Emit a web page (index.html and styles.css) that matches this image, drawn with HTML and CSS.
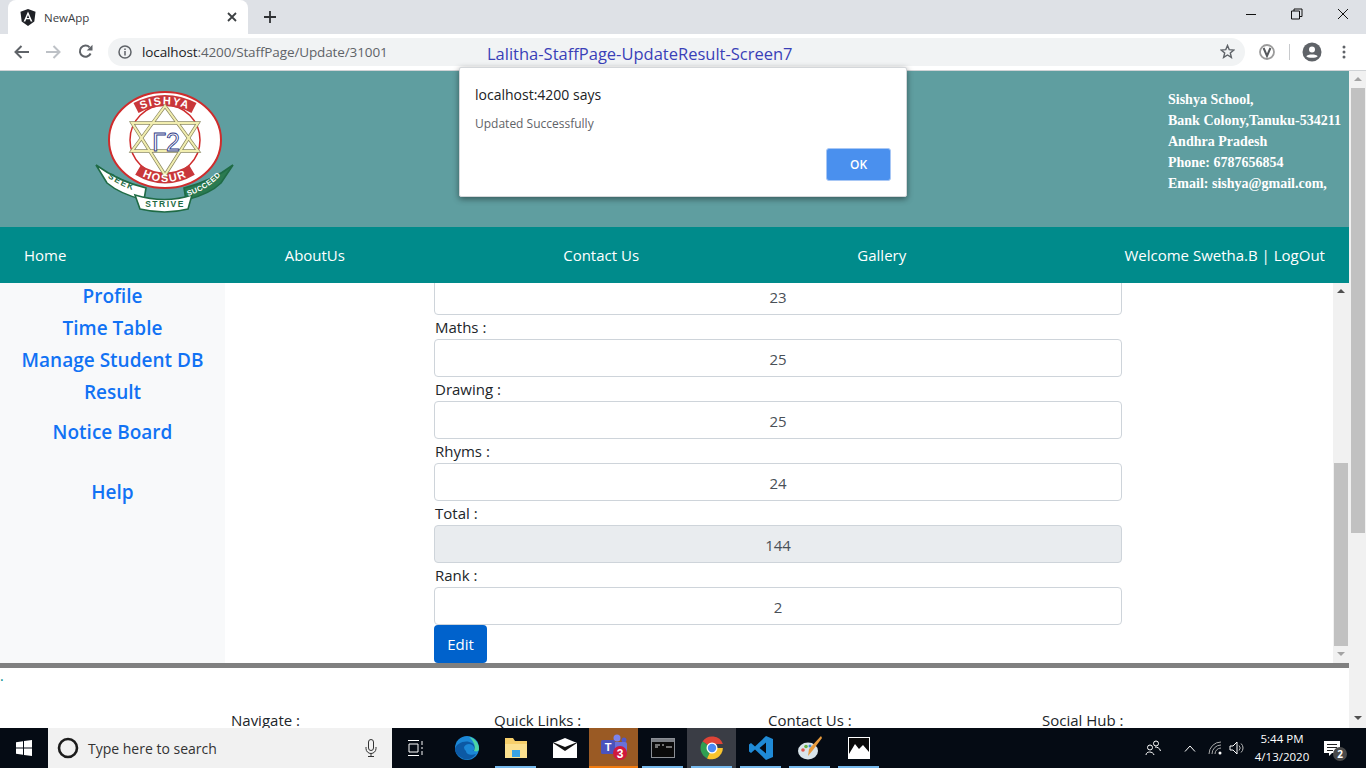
FILE: index.html
```html
<!DOCTYPE html>
<html lang="en">

<head>
    <meta charset="UTF-8">
    <title>NewApp</title>
    <link rel="stylesheet" href="styles.css">
</head>

<body>
    <div class="screen">
        <!-- browser chrome -->
        <div class="tabstrip">
            <div class="tab">
                <svg class="favicon" width="16" height="17" viewBox="0 0 16 17">
                    <path d="M8 0 L15.5 2.7 L14.3 12.6 L8 17 L1.7 12.6 L.5 2.7Z" fill="#1f2126" />
                    <path d="M8 2.6 L3.6 12.6 H5.3 L6.2 10.3 H9.8 L10.7 12.6 H12.4Z M8 6 L9.2 8.9 H6.8Z" fill="#fff" fill-rule="evenodd" />
                </svg>
                <span class="tab-title">NewApp</span>
                <svg class="tab-close" width="10" height="10" viewBox="0 0 10 10">
                    <path d="M1 1 L9 9 M9 1 L1 9" stroke="#3c4043" stroke-width="1.8" />
                </svg>
            </div>
            <svg class="new-tab" width="14" height="14" viewBox="0 0 14 14">
                <path d="M7 1 V13 M1 7 H13" stroke="#2f3134" stroke-width="1.8" />
            </svg>
            <div class="win-controls">
                <svg width="12" height="12" viewBox="0 0 12 12"><path d="M1 6.5 H11" stroke="#111" /></svg>
                <svg width="12" height="12" viewBox="0 0 12 12"><path d="M.5 3 H8.5 V11 H.5Z M3 3 V1 H11 V8.5 H8.5" fill="none" stroke="#111" /></svg>
                <svg width="12" height="12" viewBox="0 0 12 12"><path d="M1 1 L11 11 M11 1 L1 11" stroke="#111" /></svg>
            </div>
        </div>
        <div class="toolbar">
            <svg class="nav-back" width="16" height="14" viewBox="0 0 16 14">
                <path d="M15 7 H2 M7.5 1 L1.5 7 L7.5 13" fill="none" stroke="#5f6368" stroke-width="2" />
            </svg>
            <svg class="nav-forward" width="16" height="14" viewBox="0 0 16 14">
                <path d="M1 7 H14 M8.5 1 L14.5 7 L8.5 13" fill="none" stroke="#bdc1c6" stroke-width="2" />
            </svg>
            <svg class="nav-reload" width="15" height="15" viewBox="0 0 15 15">
                <path d="M12.6 9.5 A5.6 5.6 0 1 1 11.6 3.4" fill="none" stroke="#5f6368" stroke-width="2" />
                <path d="M14.5 .8 V6.6 H8.7Z" fill="#5f6368" />
            </svg>
            <div class="omnibox">
                <svg class="info-icon" width="14" height="14" viewBox="0 0 14 14">
                    <circle cx="7" cy="7" r="6" fill="none" stroke="#5f6368" stroke-width="1.5" />
                    <path d="M7 6 V10.5 M7 3.4 V5" stroke="#5f6368" stroke-width="1.5" />
                </svg>
                <span class="url"><b>localhost</b>:4200/StaffPage/Update/31001</span>
                <span class="screen-note">Lalitha-StaffPage-UpdateResult-Screen7</span>
                <svg class="star" width="15" height="15" viewBox="0 0 15 15">
                    <path d="M7.5 1.5 L9.2 5.6 L13.8 6 L10.3 8.9 L11.4 13.4 L7.5 11 L3.6 13.4 L4.7 8.9 L1.2 6 L5.8 5.6Z" fill="none" stroke="#5f6368" stroke-width="1.4" />
                </svg>
            </div>
            <svg class="ext-icon" width="16" height="16" viewBox="0 0 16 16">
                <circle cx="8" cy="8" r="7" fill="none" stroke="#9b9b9b" stroke-width="1.8" />
                <path d="M4.6 4 L8 12 L11.4 4" fill="none" stroke="#55585c" stroke-width="2" />
            </svg>
            <span class="toolbar-sep"></span>
            <svg class="profile-icon" width="20" height="20" viewBox="0 0 20 20">
                <circle cx="10" cy="10" r="9.5" fill="#5f6368" />
                <circle cx="10" cy="7.4" r="3" fill="#fff" />
                <path d="M4.3 14.2 C5.5 11.8 14.5 11.8 15.7 14.2 C14 16.4 6 16.4 4.3 14.2Z" fill="#fff" />
            </svg>
            <svg class="menu-dots" width="4" height="14" viewBox="0 0 4 14">
                <circle cx="2" cy="2" r="1.5" fill="#5f6368" />
                <circle cx="2" cy="7" r="1.5" fill="#5f6368" />
                <circle cx="2" cy="12" r="1.5" fill="#5f6368" />
            </svg>
        </div>

        <!-- the page -->
        <div class="viewport">
            <div class="page">
                <header class="site-head">
                    <svg class="logo" width="170" height="140" viewBox="0 0 170 140">
                        <defs>
                            <path id="arcTop" d="M56 32 Q85 17 114 32" />
                            <path id="arcBottom" d="M58 94 Q85 110 112 94" />
                            <path id="ribbonLeft" d="M27 97 Q42 107 60 113" />
                            <path id="ribbonRight" d="M108 116 Q128 110 145 91" />
                        </defs>
                        <!-- ribbon ends -->
                        <path d="M16 85 Q38 101 66 108 L64 120 Q40 114 27 103Z" fill="#fff" stroke="#1f6b45" stroke-width="1.6" />
                        <path d="M153 85 Q132 101 104 108 L106 120 Q130 114 141 103Z" fill="#2a7a50" stroke="#1f6b45" stroke-width="1.6" />
                        <ellipse cx="85" cy="60" rx="56" ry="48" fill="#fff" stroke="#cf2c2c" stroke-width="2" />
                        <ellipse cx="85" cy="60" rx="35" ry="35" fill="none" stroke="#cf2c2c" stroke-width="1.5" />
                        <path d="M56 28 Q85 13 114 28" fill="none" stroke="#c9373a" stroke-width="11" />
                        <path d="M58 90 Q85 106 112 90" fill="none" stroke="#c9373a" stroke-width="11" />
                        <path d="M85 26 L118 71 H52Z M85 95 L52 43 H118Z" fill="none" stroke="#8d8a63" stroke-width="3.4" />
                        <path d="M85 26 L118 71 H52Z M85 95 L52 43 H118Z" fill="none" stroke="#f2eeb0" stroke-width="2" />
                        <text class="logo-mark" x="86" y="71" text-anchor="middle">Γ2</text>
                        <text class="logo-band"><textPath href="#arcTop" startOffset="50%" text-anchor="middle">SISHYA</textPath></text>
                        <text class="logo-band"><textPath href="#arcBottom" startOffset="50%" text-anchor="middle">HOSUR</textPath></text>
                        <!-- ribbon middle -->
                        <path d="M55 115 Q85 124 112 115 L108 129 Q85 135 60 129Z" fill="#fff" stroke="#1f6b45" stroke-width="1.6" />
                        <text class="logo-ribbon"><textPath href="#ribbonLeft" startOffset="2%">SEEK</textPath></text>
                        <text class="logo-ribbon" x="85" y="127" text-anchor="middle">STRIVE</text>
                        <text class="logo-ribbon small"><textPath href="#ribbonRight">SUCCEED</textPath></text>
                    </svg>
                    <address class="school-address">
                        Sishya School,<br>
                        Bank Colony,Tanuku-534211<br>
                        Andhra Pradesh<br>
                        Phone: 6787656854<br>
                        Email: sishya@gmail.com,
                    </address>
                </header>
                <nav class="site-nav">
                    <a>Home</a>
                    <a>AboutUs</a>
                    <a>Contact Us</a>
                    <a>Gallery</a>
                    <a>Welcome Swetha.B | LogOut</a>
                </nav>
                <div class="content-row">
                    <aside class="sidebar">
                        <a>Profile</a>
                        <a>Time Table</a>
                        <a>Manage Student DB</a>
                        <a>Result</a>
                        <a class="notice-link">Notice Board</a>
                        <a class="help-link">Help</a>
                    </aside>
                    <main class="result-pane">
                        <form class="result-form">
                            <input class="mark-input" type="text" value="23">
                            <label>Maths :</label>
                            <input class="mark-input" type="text" value="25">
                            <label>Drawing :</label>
                            <input class="mark-input" type="text" value="25">
                            <label>Rhyms :</label>
                            <input class="mark-input" type="text" value="24">
                            <label>Total :</label>
                            <input class="mark-input" type="text" value="144" disabled>
                            <label>Rank :</label>
                            <input class="mark-input" type="text" value="2">
                            <button class="edit-btn" type="button">Edit</button>
                        </form>
                    </main>
                    <div class="inner-scroll">
                        <span class="arrow-up dark"></span>
                        <span class="inner-thumb"></span>
                        <span class="arrow-down light"></span>
                    </div>
                </div>
                <footer class="site-foot">
                    <div class="foot-dot">.</div>
                    <div class="foot-cols">
                        <span class="foot-nav">Navigate :</span>
                        <span>Quick Links :</span>
                        <span>Contact Us :</span>
                        <span>Social Hub :</span>
                    </div>
                </footer>
            </div>
            <div class="outer-scroll">
                <span class="arrow-up light"></span>
                <span class="outer-thumb"></span>
                <span class="arrow-down dark"></span>
            </div>
        </div>

        <!-- windows taskbar -->
        <div class="taskbar">
            <svg class="start-icon" width="16" height="16" viewBox="0 0 16 16">
                <path d="M0 2.3 L7 1.3 V7.5 H0Z M8 1.1 L16 0 V7.5 H8Z M0 8.5 H7 V14.7 L0 13.7Z M8 8.5 H16 V16 L8 14.9Z" fill="#fff" />
            </svg>
            <div class="search-box">
                <svg width="22" height="22" viewBox="0 0 22 22">
                    <circle cx="11" cy="11" r="9" fill="none" stroke="#1c1c1c" stroke-width="2.6" />
                </svg>
                <span class="search-text">Type here to search</span>
                <svg class="mic" width="12" height="18" viewBox="0 0 12 18">
                    <rect x="3.5" y=".5" width="5" height="11" rx="2.5" fill="none" stroke="#333" />
                    <path d="M1 8 V9.5 A5 5 0 0 0 11 9.5 V8 M6 14.5 V17 M3 17.5 H9" fill="none" stroke="#333" />
                </svg>
            </div>
            <svg class="taskview" width="16" height="16" viewBox="0 0 16 16">
                <path d="M0 .5 H11 M0 15.5 H11 M1 4 H10 V12 H1Z M14 1 V5 M14 7 V9 M14 11 V15" fill="none" stroke="#fff" />
            </svg>
            <div class="task-icons">
                <div class="task-app">
                    <svg width="24" height="24" viewBox="0 0 24 24">
                        <circle cx="12" cy="12" r="12" fill="#1b87d6" />
                        <path d="M0 13 C1 7 11 3 17 7 C21 10 21 14 18 15 H11 C11 18 16 20 21 18 C18 23 11 25 7 22 C3 20 0 17 0 13Z" fill="#0c59a4" />
                        <path d="M9 11 C11 7 17 7 19 11 C20 13 19 15 17 15 H11 C10 14 9 13 9 11Z" fill="#1b87d6" />
                        <path d="M14 1 C20 2 24 7 24 13 C24 15 22 16 19 15 C21 11 19 5 14 1Z" fill="#4cd6a4" />
                    </svg>
                </div>
                <div class="task-app running">
                    <svg width="24" height="22" viewBox="0 0 24 22">
                        <path d="M1 1 H9 L11 4 H23 V21 H1Z" fill="#f6cf6b" />
                        <path d="M1 7 H23 V21 H1Z" fill="#fbe08f" />
                        <path d="M8 20 V13 H16 V20 Z" fill="#3aa3e3" />
                    </svg>
                </div>
                <div class="task-app">
                    <svg width="24" height="20" viewBox="0 0 24 20">
                        <path d="M0 5 L12 0 L24 5 V20 H0Z" fill="#fff" />
                        <path d="M0 5 L24 5 L12 13Z" fill="#111" />
                        <path d="M2 5 L12 1 L22 5 L12 9Z" fill="#fff" />
                    </svg>
                </div>
                <div class="task-app teams">
                    <svg width="28" height="28" viewBox="0 0 28 28">
                        <circle cx="17" cy="5" r="3.5" fill="#7b83eb" />
                        <circle cx="24" cy="7" r="2.5" fill="#5059c9" />
                        <rect x="13" y="9" width="14" height="11" rx="2" fill="#6a71d8" />
                        <rect x="1" y="7" width="14" height="14" rx="1.5" fill="#4b53bc" />
                        <text class="teams-t" x="8" y="18" text-anchor="middle">T</text>
                        <circle cx="20" cy="20" r="7" fill="#d1193c" />
                        <text class="teams-badge" x="20" y="24.5" text-anchor="middle">3</text>
                    </svg>
                </div>
                <div class="task-app running">
                    <svg width="24" height="20" viewBox="0 0 24 20">
                        <rect x=".5" y=".5" width="23" height="19" fill="#0a0a0a" stroke="#8b8f95" />
                        <rect x="1" y="1" width="22" height="3" fill="#7b7f85" />
                        <path d="M4 7 H9 M11 7 H13 M4 9 H7 M15 9 H21" stroke="#d8d8d8" />
                    </svg>
                </div>
                <div class="task-app running active">
                    <svg width="24" height="24" viewBox="0 0 24 24">
                        <path d="M12 12 L2.6 5.5 A11.5 11.5 0 0 1 22.9 8 H12Z" fill="#de4437" />
                        <path d="M12 12 L7 22.4 A11.5 11.5 0 0 1 2.6 5.5Z" fill="#2f9e52" />
                        <path d="M12 12 H22.9 A11.5 11.5 0 0 1 7 22.4Z" fill="#f8c42e" />
                        <circle cx="12" cy="12" r="5.5" fill="#fff" />
                        <circle cx="12" cy="12" r="4.2" fill="#4a8af4" />
                    </svg>
                </div>
                <div class="task-app running">
                    <svg width="24" height="24" viewBox="0 0 24 24">
                        <path d="M17 0 L24 3 V21 L17 24 L6 13.5 L2 17 L0 15.5 V8.5 L2 7 L6 10.5Z M17 6.5 L10.5 12 L17 17.5Z" fill="#1f8ad6" fill-rule="evenodd" />
                    </svg>
                </div>
                <div class="task-app running">
                    <svg width="26" height="26" viewBox="0 0 26 26">
                        <ellipse cx="11" cy="16" rx="10" ry="8.5" fill="#d9e4ea" />
                        <circle cx="6" cy="15" r="1.8" fill="#e2574c" />
                        <circle cx="9" cy="11.5" r="1.8" fill="#67b346" />
                        <circle cx="13" cy="11" r="1.5" fill="#3f8fd8" />
                        <path d="M24 1 L25 3 L16 15 L11 21 L12 14Z" fill="#e79a3c" />
                    </svg>
                </div>
                <div class="task-app running">
                    <svg width="22" height="22" viewBox="0 0 22 22">
                        <rect width="22" height="22" fill="#fff" />
                        <rect x="1" y="1" width="20" height="20" fill="#0a0a0a" />
                        <path d="M1 17 L7 7 L11 12 L15 8 L21 15 V21 H1Z" fill="#fff" />
                    </svg>
                </div>
            </div>
            <div class="tray">
                <svg class="tray-people" width="16" height="16" viewBox="0 0 16 16">
                    <circle cx="5" cy="7.5" r="2.5" fill="none" stroke="#fff" />
                    <circle cx="11" cy="3.5" r="2.5" fill="none" stroke="#fff" />
                    <path d="M1 15 C1 11 8 11 9 15 M10 7 C12 7 15 8 15.5 11" fill="none" stroke="#fff" />
                </svg>
                <svg class="tray-caret" width="12" height="7" viewBox="0 0 12 7">
                    <path d="M1 6.5 L6 1 L11 6.5" fill="none" stroke="#fff" />
                </svg>
                <svg class="tray-wifi" width="15" height="14" viewBox="0 0 15 14">
                    <path d="M1 13 A12 12 0 0 1 13 1 M4 13 A9 9 0 0 1 13 4 M7 13 A6 6 0 0 1 13 7" fill="none" stroke="#aaa" />
                    <circle cx="12" cy="12" r="1.5" fill="#fff" />
                </svg>
                <svg class="tray-sound" width="16" height="14" viewBox="0 0 16 14">
                    <path d="M1 5 H4 L8 1 V13 L4 9 H1Z" fill="none" stroke="#fff" />
                    <path d="M10 4.5 A3.5 3.5 0 0 1 10 9.5 M12 2.5 A6 6 0 0 1 12 11.5" fill="none" stroke="#bbb" />
                </svg>
                <div class="clock">5:44 PM<br>4/13/2020</div>
                <div class="notify">
                    <svg width="16" height="15" viewBox="0 0 16 15">
                        <path d="M0 0 H16 V12 H8 L5 15 V12 H0Z" fill="#fff" />
                        <path d="M3 3.5 H13 M3 6.5 H13 M3 9.5 H9" stroke="#222" />
                    </svg>
                    <span class="notify-badge">2</span>
                </div>
            </div>
        </div>

        <!-- alert box -->
        <div class="alert-box">
            <div class="alert-title">localhost:4200 says</div>
            <div class="alert-msg">Updated Successfully</div>
            <div class="alert-actions">
                <button class="alert-ok" type="button">OK</button>
            </div>
        </div>
    </div>
</body>

</html>
```
FILE: styles.css
```css
* {
    box-sizing: border-box;
}

html,
body {
    margin: 0;
    height: 100%;
    overflow: hidden;
}

body {
    font-family: "Open Sans", "Noto Sans", sans-serif;
    color: #212529;
}

.screen {
    position: relative;
    width: 1366px;
    height: 768px;
    display: flex;
    flex-direction: column;
    overflow: hidden;
}

/* browser chrome */
.tabstrip {
    height: 34px;
    background-color: #dee1e6;
    display: flex;
    align-items: center;
    padding-left: 8px;
}

.tab {
    width: 240px;
    height: 34px;
    background-color: #fff;
    border-radius: 8px 8px 0 0;
    display: flex;
    align-items: center;
    padding: 0 11px 0 12px;
}

.tab-title {
    margin-left: 8px;
    font-size: 11.5px;
    color: #3c4043;
    flex: 1;
}

.new-tab {
    margin-left: 15px;
}

.win-controls {
    margin-left: auto;
    display: flex;
    gap: 34px;
    padding: 0 17px 6px 0;
}

.toolbar {
    height: 37px;
    background-color: #fff;
    border-bottom: 1px solid #d0d3d6;
    display: flex;
    align-items: center;
    padding: 0 20px 1px 14px;
}

.nav-forward {
    margin-left: 15px;
}

.nav-reload {
    margin-left: 17px;
}

.omnibox {
    width: 1137px;
    height: 28px;
    margin-left: 15px;
    background-color: #f1f3f4;
    border-radius: 14px;
    display: flex;
    align-items: center;
    padding-left: 10px;
    font-size: 13.5px;
}

.url {
    margin-left: 10px;
    width: 345px;
    color: #5f6368;
    white-space: nowrap;
    letter-spacing: -.12px;
}

.url b {
    font-weight: normal;
    color: #202124;
}

.screen-note {
    padding-top: 3px;
    font-size: 16.5px;
    color: #3a3fb8;
    white-space: nowrap;
}

.star {
    margin-left: auto;
    margin-right: 10px;
}

.ext-icon {
    margin-left: 14px;
}

.toolbar-sep {
    width: 1px;
    height: 16px;
    margin-left: 14px;
    background-color: #c8cacd;
}

.profile-icon {
    margin-left: 12px;
}

.menu-dots {
    margin-left: 20px;
}

/* page */
.viewport {
    flex: 1;
    display: flex;
    min-height: 0;
}

.page {
    flex: 1;
    display: flex;
    flex-direction: column;
    min-width: 0;
}

.site-head {
    height: 156px;
    flex: none;
    background-color: #5f9ea0;
    display: flex;
    justify-content: space-between;
    padding-top: 9px;
}

.logo {
    margin-left: 80px;
}

.logo-mark {
    font: 25px "Liberation Sans", sans-serif;
    fill: #fff;
    stroke: #2d3a86;
    stroke-width: .9px;
}

.logo-band {
    font: bold 11px "Liberation Sans", sans-serif;
    fill: #fff;
    letter-spacing: 1.5px;
}

.logo-ribbon {
    font: bold 8.5px "Liberation Sans", sans-serif;
    fill: #1f6b45;
    letter-spacing: 1.5px;
}

.logo-ribbon.small {
    font-size: 7.5px;
    fill: #fff;
    letter-spacing: .4px;
}

.teams-t {
    font: bold 11px "Liberation Sans", sans-serif;
    fill: #fff;
}

.teams-badge {
    font: bold 12px "Liberation Sans", sans-serif;
    fill: #fff;
}

.school-address {
    width: 181px;
    margin-top: 9px;
    font: bold 14px/21px "Liberation Serif", serif;
    color: #fff;
    white-space: nowrap;
}

.site-nav {
    height: 56px;
    flex: none;
    background-color: #008b8b;
    display: flex;
    justify-content: space-between;
    align-items: center;
    padding: 0 24px;
    font-size: 15px;
    color: #fff;
}

.content-row {
    height: 380px;
    flex: none;
    display: flex;
    overflow: hidden;
}

.sidebar {
    width: 225px;
    background-color: #f8f9fa;
    text-align: center;
}

.sidebar a {
    display: block;
    height: 32px;
    font-size: 19px;
    font-weight: 600;
    line-height: 27px;
    color: #1172f4;
}

.sidebar .notice-link {
    margin-top: 8px;
}

.sidebar .help-link {
    margin-top: 28px;
}

.result-pane {
    flex: 1;
    overflow: hidden;
}

.result-form {
    width: 688px;
    margin: -6px 0 0 209px;
}

.result-form label {
    display: block;
    height: 24px;
    padding-left: 1px;
    font-size: 15px;
    line-height: 24px;
}

.mark-input {
    display: block;
    width: 100%;
    height: 38px;
    padding-top: 2px;
    border: 1px solid #ced4da;
    border-radius: 4px;
    background-color: #fff;
    color: #495057;
    text-align: center;
    font-family: inherit;
    font-size: 15px;
}

.mark-input:disabled {
    background-color: #e9ecef;
}

.edit-btn {
    display: block;
    width: 53px;
    height: 38px;
    border: none;
    border-radius: 4px;
    background-color: #0062cc;
    color: #fff;
    font-family: inherit;
    font-size: 15px;
}

/* scrollbars */
.inner-scroll,
.outer-scroll {
    background-color: #f1f1f1;
    display: flex;
    flex-direction: column;
    align-items: center;
}

.inner-scroll {
    width: 16px;
    padding-top: 6px;
}

.outer-scroll {
    width: 17px;
    padding-top: 6px;
}

.arrow-up,
.arrow-down {
    width: 0;
    height: 0;
    border-left: 4px solid transparent;
    border-right: 4px solid transparent;
}

.arrow-up {
    border-bottom: 4px solid #505050;
}

.arrow-down {
    border-top: 4px solid #505050;
}

.arrow-up.light {
    border-bottom-color: #a3a3a3;
}

.arrow-down.light {
    border-top-color: #a3a3a3;
}

.inner-thumb {
    width: 14px;
    height: 183px;
    margin: 170px 0 6px;
    background-color: #c1c1c1;
}

.outer-thumb {
    width: 14px;
    height: 445px;
    margin: 7px 0 183px;
    background-color: #c1c1c1;
}

.site-foot {
    flex: 1;
    min-height: 0;
    border-top: 5px solid #808080;
    background-color: #fff;
    overflow: hidden;
}

.foot-dot {
    height: 42px;
    font-size: 14px;
    line-height: 16px;
    color: #008b8b;
}

.foot-cols {
    display: grid;
    grid-template-columns: 263px 274px 274px 274px;
    padding-left: 231px;
    font-size: 15px;
    line-height: 20px;
}

/* taskbar */
.taskbar {
    height: 40px;
    flex: none;
    background-color: #050b14;
    display: flex;
    align-items: center;
    color: #fff;
}

.start-icon {
    margin-left: 16px;
}

.search-box {
    width: 344px;
    height: 40px;
    margin-left: 16px;
    background-color: #f1f1f1;
    display: flex;
    align-items: center;
    padding: 0 15px 0 9px;
}

.search-text {
    flex: 1;
    margin-left: 9px;
    font-size: 14px;
    color: #333;
}

.taskview {
    margin-left: 16px;
}

.task-icons {
    display: flex;
    align-self: stretch;
    margin-left: 18px;
}

.task-app {
    width: 49px;
    display: flex;
    align-items: center;
    justify-content: center;
    position: relative;
}

.task-app.running::after {
    content: "";
    position: absolute;
    left: 4px;
    right: 4px;
    bottom: 0;
    height: 2px;
    background-color: #76b9ed;
}

.task-app.active {
    background-color: #3a3d45;
}

.task-app.teams {
    background-color: #9a5a24;
    border-bottom: 2px solid #f07b10;
}

.tray {
    margin-left: auto;
    display: flex;
    align-items: center;
    padding-right: 26px;
}

.tray-caret {
    margin-left: 23px;
}

.tray-wifi {
    margin-left: 12px;
}

.tray-sound {
    margin-left: 6px;
}

.clock {
    margin-left: 6px;
    width: 62px;
    font-size: 11.5px;
    line-height: 18px;
    text-align: center;
}

.notify {
    position: relative;
    margin-left: 11px;
    display: flex;
}

.notify-badge {
    position: absolute;
    left: 9px;
    top: 6px;
    width: 14px;
    height: 14px;
    border-radius: 50%;
    background-color: #4a4a4a;
    font-size: 10px;
    font-weight: bold;
    line-height: 14px;
    text-align: center;
}

/* alert box */
.alert-box {
    position: absolute;
    left: 459px;
    top: 67px;
    width: 448px;
    height: 130px;
    background-color: #fff;
    border-radius: 2px;
    border: 1px solid #d4d7da;
    box-shadow: 0 2px 6px rgba(0, 0, 0, .45);
    padding: 17px 15px 0;
}

.alert-title {
    font-size: 14px;
    line-height: 20px;
    color: #202124;
}

.alert-msg {
    margin-top: 10px;
    font-size: 12px;
    line-height: 17px;
    color: #5f6368;
}

.alert-actions {
    display: flex;
    justify-content: flex-end;
    margin-top: 16px;
}

.alert-ok {
    width: 65px;
    height: 33px;
    border: 1px solid #a8c7f5;
    border-radius: 3px;
    background-color: #4a90ee;
    color: #fff;
    font-family: inherit;
    font-size: 12px;
    font-weight: 600;
}
```
